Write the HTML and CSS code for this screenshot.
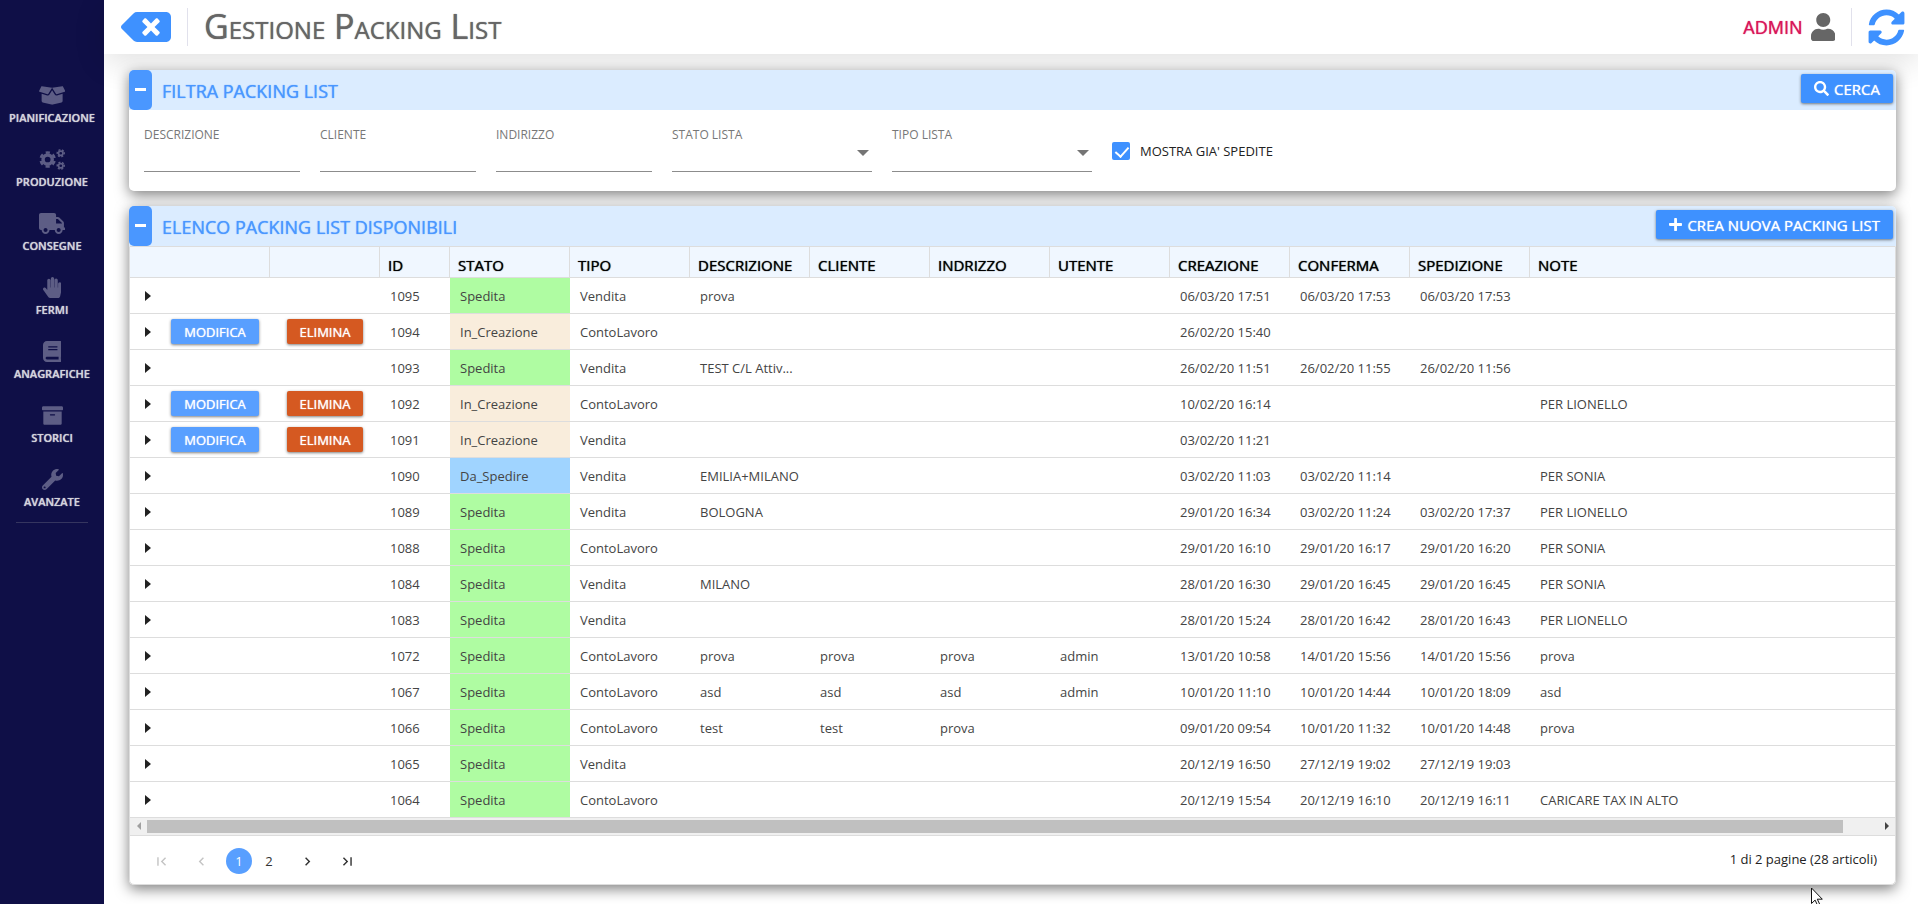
FILE: index.html
```html
<!DOCTYPE html>
<html lang="it">
<head>
    <meta charset="utf-8">
    <title>Gestione Packing List</title>
    <link rel="stylesheet" href="styles.css">
</head>
<body>
    <nav class="sidebar">
        <a href="#">
            <svg viewBox="0 0 640 512"><path d="M425.7 256c-16.9 0-32.8-9-41.4-23.4L320 126l-64.2 106.6c-8.7 14.5-24.6 23.5-41.5 23.5-4.5 0-9-.6-13.3-1.9L64 215v178c0 14.7 10 27.5 24.2 31l216.2 54.1c10.2 2.5 20.9 2.5 31 0L551.8 424c14.2-3.6 24.2-16.4 24.2-31V215l-137 39.1c-4.3 1.3-8.8 1.9-13.3 1.9zm212.6-112.2L586.8 41c-3.1-6.2-9.8-9.8-16.7-8.9L320 64l91.7 152.1c3.8 6.3 11.4 9.3 18.5 7.3l197.9-56.5c9.9-2.9 14.7-13.9 10.2-23.1zM53.2 41L1.7 143.8c-4.6 9.2.3 20.2 10.1 23l197.9 56.5c7.1 2 14.7-1 18.5-7.3L320 64 69.8 32.1c-6.9-.8-13.5 2.7-16.6 8.9z"/></svg>
            <span>PIANIFICAZIONE</span>
        </a>
        <a href="#">
            <svg viewBox="0 0 640 512">
                <g class="gear">
                    <circle cx="211" cy="256" r="112" stroke-width="84"/>
                    <circle cx="211" cy="256" r="172" stroke-width="60" stroke-dasharray="100 80.1" transform="rotate(13 211 256)"/>
                    <circle cx="530" cy="104" r="54" stroke-width="42"/>
                    <circle cx="530" cy="104" r="85" stroke-width="36" stroke-dasharray="50 39" transform="rotate(-16 530 104)"/>
                    <circle cx="530" cy="408" r="54" stroke-width="42"/>
                    <circle cx="530" cy="408" r="85" stroke-width="36" stroke-dasharray="50 39" transform="rotate(-16 530 408)"/>
                </g>
            </svg>
            <span>PRODUZIONE</span>
        </a>
        <a href="#">
            <svg viewBox="0 0 640 512"><path d="M624 352h-16V243.9c0-12.7-5.1-24.9-14.1-33.9L494 110.1c-9-9-21.2-14.1-33.9-14.1H416V48c0-26.5-21.5-48-48-48H48C21.5 0 0 21.5 0 48v320c0 26.5 21.5 48 48 48h16c0 53 43 96 96 96s96-43 96-96h128c0 53 43 96 96 96s96-43 96-96h48c8.8 0 16-7.2 16-16v-32c0-8.8-7.2-16-16-16zM160 464c-26.5 0-48-21.5-48-48s21.5-48 48-48 48 21.5 48 48-21.5 48-48 48zm320 0c-26.5 0-48-21.5-48-48s21.5-48 48-48 48 21.5 48 48-21.5 48-48 48zm80-208H416V144h44.1l99.9 99.9V256z"/></svg>
            <span>CONSEGNE</span>
        </a>
        <a href="#">
            <svg viewBox="0 0 448 512"><path d="M408.781 128.007C386.356 127.578 368 146.36 368 168.79V256h-8V79.79c0-22.43-18.356-41.212-40.781-40.783C297.488 39.423 280 57.169 280 79v177h-8V40.79C272 18.36 253.644-.422 231.219.007 209.488.423 192 18.169 192 40v216h-8V80.79c0-22.43-18.356-41.212-40.781-40.783C121.488 40.423 104 58.169 104 80v235.992l-31.648-43.519c-12.993-17.866-38.009-21.817-55.877-8.823-17.865 12.994-21.815 38.01-8.822 55.877l125.601 172.705A48 48 0 0 0 172.073 512h197.59c22.274 0 41.622-15.324 46.724-37.006l26.508-112.66a192.011 192.011 0 0 0 5.104-43.975V168c.001-21.831-17.487-39.577-39.218-39.993z"/></svg>
            <span>FERMI</span>
        </a>
        <a href="#">
            <svg viewBox="0 0 448 512"><path d="M448 360V24c0-13.3-10.7-24-24-24H96C43 0 0 43 0 96v320c0 53 43 96 96 96h328c13.3 0 24-10.7 24-24v-16c0-7.5-3.5-14.3-8.9-18.7-4.2-15.4-4.2-59.3 0-74.7 5.4-4.3 8.9-11.1 8.9-18.6zM128 134c0-3.3 2.7-6 6-6h212c3.3 0 6 2.7 6 6v20c0 3.3-2.7 6-6 6H134c-3.3 0-6-2.7-6-6v-20zm0 64c0-3.3 2.7-6 6-6h212c3.3 0 6 2.7 6 6v20c0 3.3-2.7 6-6 6H134c-3.3 0-6-2.7-6-6v-20zm253.4 250H96c-17.7 0-32-14.3-32-32 0-17.6 14.4-32 32-32h285.4c-1.9 17.1-1.9 46.9 0 64z"/></svg>
            <span>ANAGRAFICHE</span>
        </a>
        <a href="#">
            <svg viewBox="0 0 512 512"><path d="M32 448c0 17.7 14.3 32 32 32h384c17.7 0 32-14.3 32-32V160H32v288zm160-212c0-6.6 5.4-12 12-12h104c6.6 0 12 5.4 12 12v8c0 6.6-5.4 12-12 12H204c-6.6 0-12-5.4-12-12v-8zM480 32H32C14.3 32 0 46.3 0 64v48c0 8.8 7.2 16 16 16h480c8.8 0 16-7.2 16-16V64c0-17.7-14.3-32-32-32z"/></svg>
            <span>STORICI</span>
        </a>
        <a href="#">
            <svg viewBox="0 0 512 512"><path d="M507.73 109.1c-2.24-9.03-13.54-12.09-20.12-5.51l-74.36 74.36-67.88-11.31-11.31-67.88 74.36-74.36c6.62-6.62 3.43-17.9-5.66-20.16-47.38-11.74-99.55.91-136.58 37.93-39.64 39.64-50.55 97.1-34.05 147.2L18.74 402.76c-24.99 24.99-24.99 65.51 0 90.5 24.99 24.99 65.51 24.99 90.5 0l213.21-213.21c50.12 16.71 107.47 5.68 147.37-34.22 37.07-37.07 49.7-89.32 37.91-136.73zM64 472c-13.25 0-24-10.75-24-24 0-13.26 10.75-24 24-24s24 10.74 24 24c0 13.25-10.75 24-24 24z"/></svg>
            <span>AVANZATE</span>
        </a>
        <hr>
    </nav>

    <div class="page">
        <header class="topbar">
            <button class="back" aria-label="Indietro">
                <svg viewBox="0 64 640 384"><path d="M576 64H205.26A63.97 63.97 0 0 0 160 82.75L9.37 233.37c-12.5 12.5-12.5 32.76 0 45.25L160 429.25c12 12 28.28 18.75 45.25 18.75H576c35.35 0 64-28.65 64-64V128c0-35.35-28.65-64-64-64zm-84.69 254.06c6.25 6.25 6.25 16.38 0 22.63l-22.62 22.62c-6.25 6.25-16.38 6.25-22.63 0L384 301.25l-62.06 62.06c-6.25 6.25-16.38 6.25-22.63 0l-22.62-22.62c-6.25-6.25-6.25-16.38 0-22.63L338.75 256l-62.06-62.06c-6.25-6.25-6.25-16.38 0-22.63l22.62-22.62c6.25-6.25 16.38-6.25 22.63 0L384 210.75l62.06-62.06c6.25-6.25 16.38-6.25 22.63 0l22.62 22.62c6.25 6.25 6.25 16.38 0 22.63L429.25 256l62.06 62.06z"/></svg>
            </button>
            <h1>Gestione Packing List</h1>
            <a href="#" class="user">
                ADMIN
                <svg viewBox="0 0 448 512"><path d="M224 256c70.7 0 128-57.3 128-128S294.7 0 224 0 96 57.3 96 128s57.3 128 128 128zm89.6 32h-16.7c-22.2 10.2-46.9 16-72.9 16s-50.6-5.8-72.9-16h-16.7C60.2 288 0 348.2 0 422.4V464c0 26.5 21.5 48 48 48h352c26.5 0 48-21.5 48-48v-41.6c0-74.2-60.2-134.4-134.4-134.4z"/></svg>
            </a>
            <button class="refresh" aria-label="Aggiorna">
                <svg viewBox="0 0 512 512"><path d="M370.72 133.28C339.458 104.008 298.888 87.962 255.848 88c-77.458.068-144.328 53.178-162.791 126.85-1.344 5.363-6.122 9.15-11.651 9.15H24.103c-7.498 0-13.194-6.807-11.807-14.176C33.933 94.924 134.813 8 256 8c66.448 0 126.791 26.136 171.315 68.685L463.03 40.97C478.149 25.851 504 36.559 504 57.941V192c0 13.255-10.745 24-24 24H345.941c-21.382 0-32.09-25.851-16.971-40.971l41.75-41.749zM32 296h134.059c21.382 0 32.09 25.851 16.971 40.971l-41.75 41.75c31.262 29.273 71.835 45.319 114.876 45.28 77.418-.07 144.315-53.144 162.787-126.849 1.344-5.363 6.122-9.15 11.651-9.15h57.304c7.498 0 13.194 6.807 11.807 14.176C478.067 417.076 377.187 504 256 504c-66.448 0-126.791-26.136-171.315-68.685L48.97 471.03C33.851 486.149 8 475.441 8 454.059V320c0-13.255 10.745-24 24-24z"/></svg>
            </button>
        </header>

        <main>
            <!-- Filtri -->
            <section class="card">
                <div class="card-head">
                    <button class="toggle" aria-label="Comprimi"></button>
                    <h2>FILTRA PACKING LIST</h2>
                    <button class="btn">
                        <svg viewBox="0 0 512 512"><path d="M505 442.7L405.3 343c-4.5-4.5-10.6-7-17-7H372c27.6-35.3 44-79.7 44-128C416 93.1 322.9 0 208 0S0 93.1 0 208s93.1 208 208 208c48.3 0 92.7-16.4 128-44v16.3c0 6.4 2.5 12.5 7 17l99.7 99.7c9.4 9.4 24.6 9.4 33.9 0l28.3-28.3c9.4-9.4 9.4-24.6.1-34zM208 336c-70.7 0-128-57.2-128-128 0-70.7 57.2-128 128-128 70.7 0 128 57.2 128 128 0 70.7-57.2 128-128 128z"/></svg>
                        CERCA
                    </button>
                </div>
                <form class="filters" onsubmit="return false;">
                    <div class="field">
                        <label for="descrizione">DESCRIZIONE</label>
                        <input type="text" id="descrizione">
                    </div>
                    <div class="field">
                        <label for="cliente">CLIENTE</label>
                        <input type="text" id="cliente">
                    </div>
                    <div class="field">
                        <label for="indirizzo">INDIRIZZO</label>
                        <input type="text" id="indirizzo">
                    </div>
                    <div class="field drop">
                        <label for="stato">STATO LISTA</label>
                        <select id="stato"><option value=""></option></select>
                    </div>
                    <div class="field drop">
                        <label for="tipo">TIPO LISTA</label>
                        <select id="tipo"><option value=""></option></select>
                    </div>
                    <div class="check">
                        <input type="checkbox" id="spedite" checked>
                        <label for="spedite">MOSTRA GIA' SPEDITE</label>
                    </div>
                </form>
            </section>

            <!-- Elenco -->
            <section class="card">
                <div class="card-head">
                    <button class="toggle" aria-label="Comprimi"></button>
                    <h2>ELENCO PACKING LIST DISPONIBILI</h2>
                    <button class="btn">
                        <svg viewBox="0 0 448 512"><path d="M416 208H272V64c0-17.67-14.33-32-32-32h-32c-17.67 0-32 14.33-32 32v144H32c-17.67 0-32 14.33-32 32v32c0 17.67 14.33 32 32 32h144v144c0 17.67 14.33 32 32 32h32c17.67 0 32-14.33 32-32V304h144c17.67 0 32-14.33 32-32v-32c0-17.67-14.33-32-32-32z"/></svg>
                        CREA NUOVA PACKING LIST
                    </button>
                </div>
                <div class="grid">
                    <table>
                        <colgroup>
                            <col class="c-exp"><col class="c-cmd"><col class="c-cmd"><col class="c-id">
                            <col class="c-std"><col class="c-std"><col class="c-std"><col class="c-std"><col class="c-std">
                            <col class="c-std"><col class="c-std"><col class="c-std"><col class="c-std"><col>
                        </colgroup>
                        <thead>
                            <tr>
                                <th colspan="2"></th><th></th><th>ID</th><th>STATO</th><th>TIPO</th><th>DESCRIZIONE</th><th>CLIENTE</th><th>INDRIZZO</th><th>UTENTE</th><th>CREAZIONE</th><th>CONFERMA</th><th>SPEDIZIONE</th><th>NOTE</th>
                            </tr>
                        </thead>
                        <tbody>
                            <tr><td class="exp"></td><td></td><td></td><td>1095</td><td class="spedita">Spedita</td><td>Vendita</td><td>prova</td><td></td><td></td><td></td><td>06/03/20 17:51</td><td>06/03/20 17:53</td><td>06/03/20 17:53</td><td></td></tr>
                            <tr><td class="exp"></td><td class="cmd"><button class="mod">MODIFICA</button></td><td class="cmd"><button class="del">ELIMINA</button></td><td>1094</td><td class="creazione">In_Creazione</td><td>ContoLavoro</td><td></td><td></td><td></td><td></td><td>26/02/20 15:40</td><td></td><td></td><td></td></tr>
                            <tr><td class="exp"></td><td></td><td></td><td>1093</td><td class="spedita">Spedita</td><td>Vendita</td><td>TEST C/L Attiv...</td><td></td><td></td><td></td><td>26/02/20 11:51</td><td>26/02/20 11:55</td><td>26/02/20 11:56</td><td></td></tr>
                            <tr><td class="exp"></td><td class="cmd"><button class="mod">MODIFICA</button></td><td class="cmd"><button class="del">ELIMINA</button></td><td>1092</td><td class="creazione">In_Creazione</td><td>ContoLavoro</td><td></td><td></td><td></td><td></td><td>10/02/20 16:14</td><td></td><td></td><td>PER LIONELLO</td></tr>
                            <tr><td class="exp"></td><td class="cmd"><button class="mod">MODIFICA</button></td><td class="cmd"><button class="del">ELIMINA</button></td><td>1091</td><td class="creazione">In_Creazione</td><td>Vendita</td><td></td><td></td><td></td><td></td><td>03/02/20 11:21</td><td></td><td></td><td></td></tr>
                            <tr><td class="exp"></td><td></td><td></td><td>1090</td><td class="daspedire">Da_Spedire</td><td>Vendita</td><td>EMILIA+MILANO</td><td></td><td></td><td></td><td>03/02/20 11:03</td><td>03/02/20 11:14</td><td></td><td>PER SONIA</td></tr>
                            <tr><td class="exp"></td><td></td><td></td><td>1089</td><td class="spedita">Spedita</td><td>Vendita</td><td>BOLOGNA</td><td></td><td></td><td></td><td>29/01/20 16:34</td><td>03/02/20 11:24</td><td>03/02/20 17:37</td><td>PER LIONELLO</td></tr>
                            <tr><td class="exp"></td><td></td><td></td><td>1088</td><td class="spedita">Spedita</td><td>ContoLavoro</td><td></td><td></td><td></td><td></td><td>29/01/20 16:10</td><td>29/01/20 16:17</td><td>29/01/20 16:20</td><td>PER SONIA</td></tr>
                            <tr><td class="exp"></td><td></td><td></td><td>1084</td><td class="spedita">Spedita</td><td>Vendita</td><td>MILANO</td><td></td><td></td><td></td><td>28/01/20 16:30</td><td>29/01/20 16:45</td><td>29/01/20 16:45</td><td>PER SONIA</td></tr>
                            <tr><td class="exp"></td><td></td><td></td><td>1083</td><td class="spedita">Spedita</td><td>Vendita</td><td></td><td></td><td></td><td></td><td>28/01/20 15:24</td><td>28/01/20 16:42</td><td>28/01/20 16:43</td><td>PER LIONELLO</td></tr>
                            <tr><td class="exp"></td><td></td><td></td><td>1072</td><td class="spedita">Spedita</td><td>ContoLavoro</td><td>prova</td><td>prova</td><td>prova</td><td>admin</td><td>13/01/20 10:58</td><td>14/01/20 15:56</td><td>14/01/20 15:56</td><td>prova</td></tr>
                            <tr><td class="exp"></td><td></td><td></td><td>1067</td><td class="spedita">Spedita</td><td>ContoLavoro</td><td>asd</td><td>asd</td><td>asd</td><td>admin</td><td>10/01/20 11:10</td><td>10/01/20 14:44</td><td>10/01/20 18:09</td><td>asd</td></tr>
                            <tr><td class="exp"></td><td></td><td></td><td>1066</td><td class="spedita">Spedita</td><td>ContoLavoro</td><td>test</td><td>test</td><td>prova</td><td></td><td>09/01/20 09:54</td><td>10/01/20 11:32</td><td>10/01/20 14:48</td><td>prova</td></tr>
                            <tr><td class="exp"></td><td></td><td></td><td>1065</td><td class="spedita">Spedita</td><td>Vendita</td><td></td><td></td><td></td><td></td><td>20/12/19 16:50</td><td>27/12/19 19:02</td><td>27/12/19 19:03</td><td></td></tr>
                            <tr><td class="exp"></td><td></td><td></td><td>1064</td><td class="spedita">Spedita</td><td>ContoLavoro</td><td></td><td></td><td></td><td></td><td>20/12/19 15:54</td><td>20/12/19 16:10</td><td>20/12/19 16:11</td><td>CARICARE TAX IN ALTO</td></tr>
                        </tbody>
                    </table>
                    <div class="scroll">
                        <svg class="off" viewBox="0 0 17 17"><path d="M11 4v8L7 8z"/></svg>
                        <div class="track"><div class="thumb"></div></div>
                        <svg viewBox="0 0 17 17"><path d="M7 4v8l4-4z"/></svg>
                    </div>
                    <div class="pager">
                        <button class="nav" aria-label="Prima pagina" disabled><svg viewBox="0 0 24 24"><path d="M18.41 16.59L13.82 12l4.59-4.59L17 6l-6 6 6 6zM6 6h2v12H6z"/></svg></button>
                        <button class="nav" aria-label="Pagina precedente" disabled><svg viewBox="0 0 24 24"><path d="M15.41 7.41L14 6l-6 6 6 6 1.41-1.41L10.83 12z"/></svg></button>
                        <div class="numbers">
                            <button class="current">1</button>
                            <button>2</button>
                        </div>
                        <button class="nav" aria-label="Pagina successiva"><svg viewBox="0 0 24 24"><path d="M10 6L8.59 7.41 13.17 12l-4.58 4.59L10 18l6-6z"/></svg></button>
                        <button class="nav" aria-label="Ultima pagina"><svg viewBox="0 0 24 24"><path d="M5.59 7.41L10.18 12l-4.59 4.59L7 18l6-6-6-6zM16 6h2v12h-2z"/></svg></button>
                        <span class="info">1 di 2 pagine (28 articoli)</span>
                    </div>
                </div>
            </section>
        </main>
    </div>

    <svg class="pointer" viewBox="0 0 12 19"><path d="M.5 1v15.500l3.600-3.400 2.500 5.400 2.200-1-2.500-5.300h5z"/></svg>
</body>
</html>
```
FILE: styles.css
```css
* {
    box-sizing: border-box;
}
body {
    margin: 0;
    display: flex;
    min-height: 100vh;
    background-color: #fff;
    font-family: "Open Sans", sans-serif;
    font-size: 13px;
    color: #222;
    overflow: hidden;
}
button {
    font-family: inherit;
    border: 0;
    padding: 0;
    background: none;
    cursor: pointer;
}
svg {
    display: block;
    fill: currentColor;
}

/* Menu laterale */
.sidebar {
    flex: none;
    width: 104px;
    padding-top: 85px;
    background-color: #0f0f47;
}
.sidebar a {
    display: flex;
    flex-direction: column;
    align-items: center;
    height: 64px;
    color: #d3d3dc;
    font-size: 11px;
    font-weight: 600;
    line-height: 16px;
    text-decoration: none;
    text-shadow: 0 0 1px currentColor;
}
.sidebar svg {
    height: 21px;
    margin-bottom: 4px;
    color: #5d5d85;
}
.gear {
    fill: none;
    stroke: currentColor;
}
.sidebar hr {
    width: 72px;
    margin: -11px auto 0;
    border: 0;
    border-top: 1px solid #35355f;
}

.page {
    flex: 1;
    min-width: 0;
}

/* Barra superiore */
.topbar {
    display: flex;
    align-items: center;
    height: 54px;
    padding: 0 13px 0 17px;
    background-color: #fff;
    box-shadow: 0 8px 32px rgba(0, 0, 0, 0.12);
}
.back {
    color: #3e91ff;
}
.back svg {
    width: 50px;
    height: 30px;
}
.topbar h1 {
    flex: 1;
    height: 38px;
    margin: 0 0 0 16px;
    padding-left: 16px;
    border-left: 1px solid #e1e1ec;
    color: #666;
    font-size: 34px;
    font-weight: 400;
    font-variant: small-caps;
    line-height: 36px;
    text-shadow: 0 0 1px currentColor;
}
.user {
    display: flex;
    align-items: center;
    gap: 8px;
    height: 38px;
    padding-right: 16px;
    border-right: 1px solid #e1e1ec;
    color: #d9155a;
    font-size: 18px;
    text-decoration: none;
    text-shadow: 0 0 1px currentColor;
}
.user svg {
    height: 28px;
    color: #666;
}
.refresh {
    margin-left: 16px;
    color: #3e91ff;
}
.refresh svg {
    width: 37px;
    height: 37px;
}

main {
    padding: 16px 22px 20px 25px;
}

/* Pannelli */
.card {
    margin-bottom: 15px;
    border-radius: 5px;
    background-color: #fff;
    box-shadow: 0 4px 14px rgba(0, 0, 0, 0.5);
}
.card-head {
    display: flex;
    align-items: center;
    height: 40px;
    padding-right: 3px;
    border-radius: 5px 5px 0 0;
    background-color: #dbecff;
}
.toggle {
    width: 23px;
    height: 40px;
    padding-bottom: 2px;
    border-radius: 5px;
    background-color: #4a97ff;
}
.toggle::before {
    content: "";
    display: block;
    width: 11px;
    height: 3px;
    margin: 0 auto;
    background-color: #fff;
}
.card-head h2 {
    flex: 1;
    margin: 0 0 0 10px;
    padding-top: 1px;
    color: #4a97ff;
    font-size: 18px;
    font-weight: 500;
    text-shadow: 0 0 1px currentColor;
}
.btn {
    display: flex;
    align-items: center;
    gap: 5px;
    height: 29px;
    margin-bottom: 3px;
    padding: 0 13px;
    border-radius: 2px;
    background-color: #3e91ff;
    box-shadow: 0 1px 3px rgba(0, 0, 0, 0.5);
    color: #fff;
    font-size: 15px;
    font-weight: 500;
    text-shadow: 0 0 1px currentColor;
}
.btn svg {
    height: 15px;
}

/* Filtri */
.filters {
    display: flex;
    gap: 20px;
    padding: 17px 15px 19px;
}
.field {
    position: relative;
    width: 156px;
}
.field label {
    display: block;
    color: #777;
    font-size: 12px;
    line-height: 16px;
}
.field input, .field select {
    display: block;
    width: 100%;
    height: 29px;
    border: 0;
    border-bottom: 1px solid #8c8c8c;
    background: none;
    font-family: inherit;
    outline: none;
    appearance: none;
}
.drop {
    width: 200px;
}
.drop::after {
    content: "";
    position: absolute;
    right: 3px;
    top: 23px;
    border: 6px solid transparent;
    border-top-color: #757575;
    border-bottom: 0;
    pointer-events: none;
}
.check {
    display: flex;
    align-items: center;
    gap: 10px;
    padding-top: 3px;
}
.check input {
    width: 18px;
    height: 18px;
    margin: 0;
    border-radius: 2px;
    background-color: #3e91ff;
    appearance: none;
}
.check input:checked::before {
    content: "";
    display: block;
    width: 6px;
    height: 11px;
    margin: 2px 0 0 6px;
    border: solid #fff;
    border-width: 0 2px 2px 0;
    transform: rotate(42deg);
}

/* Tabella */
.grid {
    border: 1px solid #ddd;
    border-radius: 0 0 5px 5px;
}
table {
    width: 100%;
    table-layout: fixed;
    border-collapse: separate;
    border-spacing: 0;
}
.c-exp {
    width: 30px;
}
.c-cmd {
    width: 110px;
}
.c-id {
    width: 70px;
}
.c-std {
    width: 120px;
}
th {
    height: 31px;
    padding: 6px 0 0 8px;
    border-right: 1px solid #ddd;
    border-bottom: 1px solid #ddd;
    background-color: #f0f7ff;
    color: #000;
    font-size: 15px;
    font-weight: 500;
    text-align: left;
    text-shadow: 0 0 1px currentColor;
}
th:last-child {
    border-right: 0;
}
td {
    height: 36px;
    padding: 0 0 0 10px;
    border-bottom: 1px solid #ddd;
    color: #444;
    white-space: nowrap;
}
.spedita {
    background-color: #affca2;
}
.creazione {
    background-color: #f9eddc;
}
.daspedire {
    background-color: #a0d4ff;
}
.exp {
    padding-left: 15px;
}
.exp::before {
    content: "";
    display: block;
    width: 0;
    border: 5px solid transparent;
    border-left: 6px solid #222;
    border-right: 0;
}
.cmd {
    padding: 0;
    text-align: center;
}
.cmd button {
    height: 25px;
    padding: 0 13px;
    border-radius: 2px;
    box-shadow: 0 1px 3px rgba(0, 0, 0, 0.5);
    color: #fff;
    font-size: 13px;
    font-weight: 500;
    text-shadow: 0 0 1px currentColor;
}
.mod {
    background-color: #589fff;
}
.del {
    background-color: #d55921;
}

/* Barra di scorrimento e paginazione */
.scroll {
    display: flex;
    height: 18px;
    border-bottom: 1px solid #ddd;
    background-color: #f0f0f0;
    color: #444;
}
.scroll svg {
    width: 17px;
    height: 17px;
}
.scroll .off {
    color: #a0a0a0;
}
.track {
    flex: 1;
    padding: 2px 0;
}
.thumb {
    width: 98%;
    height: 13px;
    background-color: #c0c0c0;
}
.pager {
    display: flex;
    align-items: center;
    height: 48px;
    padding: 2px 18px 0 11px;
}
.pager button {
    color: #333;
    font-size: 13px;
}
.nav {
    width: 40px;
}
.nav svg {
    width: 17px;
    height: 17px;
    margin: 0 auto;
}
.pager button:disabled {
    color: #c4c4c4;
}
.numbers {
    display: flex;
    gap: 4px;
    padding: 0 5px;
}
.numbers button {
    width: 26px;
    height: 26px;
    border-radius: 50%;
}
.pager .current {
    background-color: #589fff;
    color: #fff;
}
.info {
    margin-left: auto;
    padding-bottom: 4px;
}

.pointer {
    position: absolute;
    right: 95px;
    bottom: -2px;
    width: 12px;
    height: 19px;
    fill: #fff;
    stroke: #111;
}
```
